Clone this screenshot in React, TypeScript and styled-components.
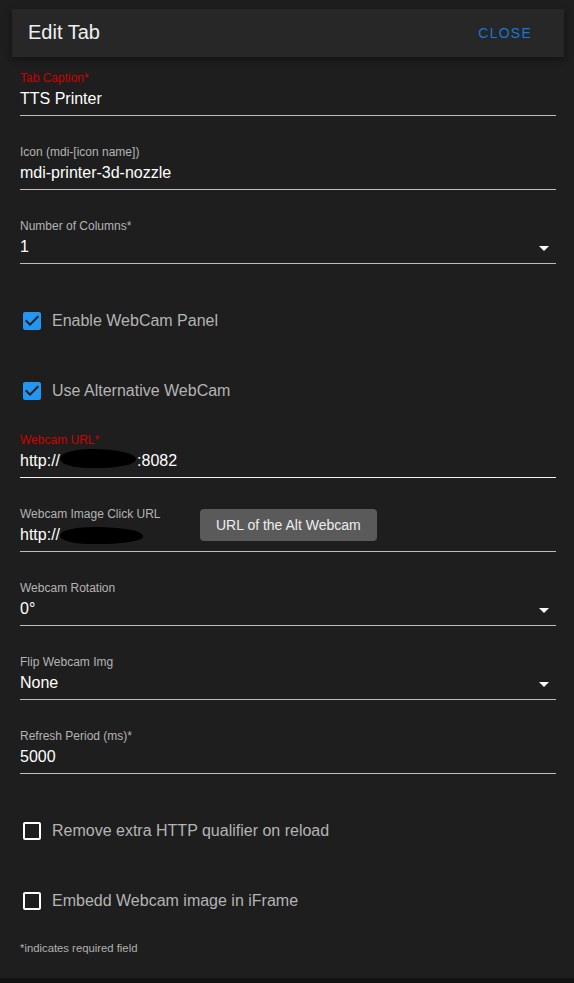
import React from "react";
import styled, { createGlobalStyle } from "styled-components";

const Global = createGlobalStyle`
  html, body { margin: 0; padding: 0; background: #121212; }
  body { font-family: "Liberation Sans", Arial, sans-serif; }
  * { box-sizing: border-box; }
`;

const Card = styled.div`
  width: 574px;
  background: #1e1e1e;
  padding: 9px 0 22px 0;
  display: flex;
  flex-direction: column;
`;

const Toolbar = styled.header`
  margin: 0 10px 0 12px;
  height: 48px;
  background: #272727;
  display: flex;
  align-items: center;
  justify-content: space-between;
  padding: 0 16px;
  box-shadow: 0 2px 4px -1px rgba(0, 0, 0, 0.2), 0 4px 5px 0 rgba(0, 0, 0, 0.14),
    0 1px 10px 0 rgba(0, 0, 0, 0.12);
`;

const Title = styled.div`
  font-size: 20px;
  color: #f0f0f0;
  padding-bottom: 2px;
`;

const TextButton = styled.button`
  background: none;
  border: none;
  padding: 0 16px;
  height: 36px;
  font-family: inherit;
  font-size: 14px;
  letter-spacing: 0.0892em;
  text-transform: uppercase;
  color: #1976d2;
  cursor: pointer;
`;

const Form = styled.div`
  padding: 0 18px 0 20px;
  display: flex;
  flex-direction: column;
`;

const Field = styled.div<{ $top: number; $line?: string }>`
  position: relative;
  margin-top: ${(p) => p.$top}px;
  padding-bottom: 4px;
  border-bottom: 1px solid ${(p) => p.$line || "#bdbdbd"};
`;

const Label = styled.div<{ $error?: boolean }>`
  font-size: 12px;
  line-height: 16px;
  height: 16px;
  color: ${(p) => (p.$error ? "#cc0000" : "#b4b4b4")};
`;

const ValueRow = styled.div`
  display: flex;
  align-items: center;
  justify-content: space-between;
  height: 24px;
  margin-top: 1px;
`;

const Value = styled.div`
  font-size: 16px;
  line-height: 24px;
  color: #ffffff;
  white-space: nowrap;
`;

const Redact = styled.span<{ $w: number; $h: number; $dy: number }>`
  display: inline-block;
  vertical-align: top;
  width: ${(p) => p.$w}px;
  height: ${(p) => p.$h}px;
  margin-top: ${(p) => p.$dy}px;
  margin-right: 1px;
  background: #000;
  border-radius: 45% 60% 55% 40% / 50% 55% 45% 50%;
`;

const ArrowIcon = styled.svg`
  width: 24px;
  height: 24px;
  flex: none;
  margin-top: 2px;
`;

const Tooltip = styled.div`
  position: absolute;
  left: 180px;
  top: 3px;
  background: rgba(97, 97, 97, 0.9);
  color: #eeeeee;
  font-size: 14px;
  line-height: 22px;
  padding: 5px 16px;
  border-radius: 4px;
  white-space: nowrap;
`;

const CheckRow = styled.label<{ $top: number }>`
  display: flex;
  align-items: center;
  height: 24px;
  margin-top: ${(p) => p.$top}px;
  gap: 8px;
`;

const CheckText = styled.span`
  font-size: 16px;
  color: #b4b4b4;
`;

const Footnote = styled.div`
  margin-top: 27px;
  font-size: 11.3px;
  line-height: 16px;
  color: #b0b0b0;
`;

const MenuDown = () => (
  <ArrowIcon viewBox="0 0 24 24">
    <path d="M7,10L12,15L17,10H7Z" fill="#ffffff" />
  </ArrowIcon>
);

const CheckIcon = ({ checked }: { checked: boolean }) => (
  <svg width="24" height="24" viewBox="0 0 24 24">
    {checked ? (
      <path
        fill="#2196f3"
        d="M10,17L5,12L6.41,10.58L10,14.17L17.59,6.58L19,8M19,3H5C3.89,3 3,3.89 3,5V19A2,2 0 0,0 5,21H19A2,2 0 0,0 21,19V5C21,3.89 20.1,3 19,3Z"
      />
    ) : (
      <path
        fill="#ffffff"
        d="M19,3H5C3.89,3 3,3.89 3,5V19A2,2 0 0,0 5,21H19A2,2 0 0,0 21,19V5C21,3.89 20.1,3 19,3M19,5V19H5V5H19Z"
      />
    )}
  </svg>
);

const Check = ({ top, checked, label }: { top: number; checked: boolean; label: string }) => (
  <CheckRow $top={top}>
    <CheckIcon checked={checked} />
    <CheckText>{label}</CheckText>
  </CheckRow>
);

export default function App() {
  return (
    <>
      <Global />
      <Card>
        <Toolbar>
          <Title>Edit Tab</Title>
          <TextButton>Close</TextButton>
        </Toolbar>
        <Form>
          <Field $top={13}>
            <Label $error>Tab Caption*</Label>
            <ValueRow>
              <Value>TTS Printer</Value>
            </ValueRow>
          </Field>
          <Field $top={28}>
            <Label>Icon (mdi-[icon name])</Label>
            <ValueRow>
              <Value>mdi-printer-3d-nozzle</Value>
            </ValueRow>
          </Field>
          <Field $top={28}>
            <Label>Number of Columns*</Label>
            <ValueRow>
              <Value>1</Value>
              <MenuDown />
            </ValueRow>
          </Field>

          <Check top={45} checked label="Enable WebCam Panel" />
          <Check top={46} checked label="Use Alternative WebCam" />

          <Field $top={29} $line="#f2f2f2">
            <Label $error>Webcam URL*</Label>
            <ValueRow>
              <Value>
                http://
                <Redact $w={76} $h={19} $dy={0} />
                :8082
              </Value>
            </ValueRow>
          </Field>
          <Field $top={28}>
            <Label>Webcam Image Click URL</Label>
            <ValueRow>
              <Value>
                http://
                <Redact $w={83} $h={17} $dy={4} />
              </Value>
            </ValueRow>
            <Tooltip>URL of the Alt Webcam</Tooltip>
          </Field>
          <Field $top={28}>
            <Label>Webcam Rotation</Label>
            <ValueRow>
              <Value>0°</Value>
              <MenuDown />
            </ValueRow>
          </Field>
          <Field $top={28}>
            <Label>Flip Webcam Img</Label>
            <ValueRow>
              <Value>None</Value>
              <MenuDown />
            </ValueRow>
          </Field>
          <Field $top={28}>
            <Label>Refresh Period (ms)*</Label>
            <ValueRow>
              <Value>5000</Value>
            </ValueRow>
          </Field>

          <Check top={45} checked={false} label="Remove extra HTTP qualifier on reload" />
          <Check top={46} checked={false} label="Embedd Webcam image in iFrame" />

          <Footnote>*indicates required field</Footnote>
        </Form>
      </Card>
    </>
  );
}
